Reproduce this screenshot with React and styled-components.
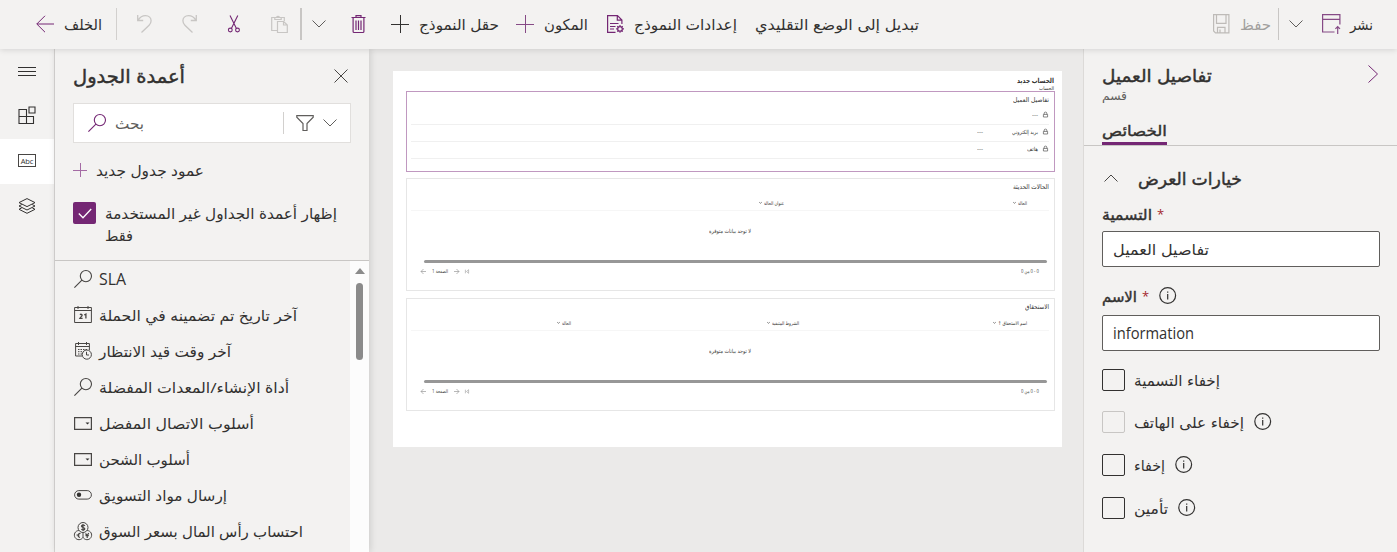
import React, { useLayoutEffect, useRef, useState } from "react";
import styled, { createGlobalStyle } from "styled-components";

const purple = "#742774";
const ink = "#323130";
const soft = "#484644";

const GlobalStyle = createGlobalStyle`
  * { box-sizing: border-box; }
  body {
    margin: 0;
    overflow: hidden;
    background: #ebeae9;
    color: ${ink};
    font-family: "Open Sans", "Noto Sans", "DejaVu Sans Condensed", "DejaVu Sans", sans-serif;
  }
`;

/* ---------- text ---------- */

const TextBox = styled.span`
  display: block;
  flex: none;
  direction: ltr;
  text-align: left;
  width: ${(p) => p.$w}px;
  height: ${(p) => p.$lh}px;
  line-height: ${(p) => p.$lh}px;
  font-size: ${(p) => p.$size}px;
  font-weight: ${(p) => p.$weight};
  color: ${(p) => p.$color};
  -webkit-text-stroke: ${(p) => (p.$semi ? 0.4 : 0)}px currentColor;
`;

const TextInner = styled.span`
  display: inline-block;
  vertical-align: top;
  direction: rtl;
  white-space: nowrap;
  transform-origin: left center;
`;

function Text({ w, size = 14, lh = 20, weight = 400, color = ink, semi, children }) {
  const ref = useRef(null);
  const [scale, setScale] = useState(1);
  useLayoutEffect(() => {
    if (ref.current?.offsetWidth) setScale(w / ref.current.getBoundingClientRect().width);
  }, [w]);
  return (
    <TextBox $w={w} $size={size} $lh={lh} $weight={weight} $color={color} $semi={semi}>
      <TextInner ref={ref} style={{ transform: `scaleX(${scale})` }}>{children}</TextInner>
    </TextBox>
  );
}

/* ---------- icons ---------- */

const Svg = styled.svg`
  display: block;
  flex: none;
  overflow: visible;
  fill: none;
  stroke: ${(p) => p.$color || soft};
  stroke-width: ${(p) => p.$sw || 1};
`;

const Icon = ({ w = 18, h = 18, color, sw, children }) => (
  <Svg width={w} height={h} viewBox={`0 0 ${w} ${h}`} $color={color} $sw={sw}>{children}</Svg>
);

const BackIcon = () => (
  <Icon color={purple}><path d="M18 9H.8M9 .8L.8 9 9 17.200" /></Icon>
);
const UndoIcon = () => (
  <Icon w={15} h={18} color="#c8c6c4" sw={1.3}><path d="M.7 0v5.500h5.500M1 5.300C3 2 5.500 .6 8.500 .6c3.500 0 5.600 2.400 5.600 5.200 0 2-.8 3.200-2 4.400L4.500 17.500" /></Icon>
);
const RedoIcon = () => (
  <Icon w={15} h={18} color="#c8c6c4" sw={1.3}><path d="M14.300 0v5.500H8.800M14 5.300C12 2 9.500.6 6.500.6 3 .6.9 3 .9 5.800c0 2 .8 3.200 2 4.400L10.500 17.500" /></Icon>
);
const CutIcon = () => (
  <Icon w={12} h={18} color={purple} sw={1.1}>
    <path d="M2 .5l6.300 12.800M9.800.5L3.500 13.300" /><circle cx="2.300" cy="15" r="1.900" /><circle cx="9.500" cy="15" r="1.900" />
  </Icon>
);
const PasteIcon = () => (
  <Icon w={17} h={18} color="#c8c6c4" sw={1.2}>
    <path d="M6 15.500H.7v-13h12.600V6M3.800 4.500v-2h1.700a1.600 1.600 0 013 0h1.700v2zM6.500 6.500h6.200l3.600 3.500v7.500H6.500zM12.500 6.500V10h3.800" />
  </Icon>
);
const ChevronDown = ({ w = 14, color = "#605e5c" }) => (
  <Icon w={w} h={8} color={color}><path d={`M.5.5L${w / 2} 7 ${w - 0.5}.5`} /></Icon>
);
const ChevronUp = () => (
  <Icon w={14} h={8}><path d="M.5 7.500L7 1l6.500 6.500" /></Icon>
);
const TrashIcon = () => (
  <Icon w={15} h={18} color={purple} sw={1.2}>
    <path d="M.5 2.500h14M5 2.500V.6h5v1.900M2.100 2.500v14a1 1 0 001 1h8.800a1 1 0 001-1v-14M5 5.500v9.500M7.500 5.500v9.500M10 5.500v9.500" />
  </Icon>
);
const PlusIcon = ({ size = 18, color = ink }) => (
  <Icon w={size} h={size} color={color}>
    <path d={`M${Math.floor(size / 2) + 0.5} 0v${size}M0 ${Math.floor(size / 2) + 0.5}h${size}`} />
  </Icon>
);
const FormSettingsIcon = () => (
  <Icon w={17} h={18} color={purple} sw={1.2}>
    <path d="M8.500 17.400H.6V.6h9.900l4.400 4.400v4M10.300.6v4.600h4.600M3 8.500h8.500M3 11.500h5.500M3 14h4" />
    <circle cx="13" cy="13.900" r="2.300" />
    <path d="M13 10v1.600M13 16.200v1.600M9.100 13.900h1.600M15.300 13.900H17M10.300 11.200l1.100 1.100M14.600 15.500l1.100 1.100M15.700 11.200l-1.100 1.100M11.400 15.500l-1.100 1.100" />
  </Icon>
);
const SaveIcon = () => (
  <Icon w={17} h={20} color="#bebbb8" sw={1.2}>
    <path d="M.6.6h15.300v18.300H2.500L.6 17zM3.500.6v8.700h9.500V.6M4.500 18.900v-5.600h7.500v5.600M7 15.500v3.400" />
  </Icon>
);
const PublishIcon = () => (
  <Icon w={19} h={20} color="#864a86" sw={1.2}>
    <path d="M12.500 18H.6V.6h17.300v10M.6 5.300h17.300M15.700 20v-7.500M13.400 14.800l2.300-2.300 2.300 2.300" />
  </Icon>
);
const MenuIcon = () => <Icon h={10} color={ink}><path d="M0 .5h18M0 4.500h18M0 8.500h18" /></Icon>;
const ComponentsIcon = () => (
  <Icon w={18} h={18} color={ink} sw={1.1}>
    <path d="M1 3.500h7.500v14H1zM1 10.500h14.500v7H1M11 1h6v6h-6z" />
  </Icon>
);
const AbcFrame = styled.span`
  display: grid;
  place-items: center;
  width: 18px;
  height: 13px;
  border: 1px solid ${soft};
  font-size: 7.500px;
  line-height: 10px;
  letter-spacing: -0.1px;
`;
const LayersIcon = () => (
  <Icon w={18} h={16} color={ink}>
    <path d="M9 .6l8 4-8 4-8-4zM3.800 6.500L1 8l8 4 8-4-2.800-1.500M3.800 9.800L1 11.300l8 4 8-4-2.800-1.500" />
  </Icon>
);
const CloseIcon = () => <Icon w={14} h={14}><path d="M.5.5l13 13M13.500.5l-13 13" /></Icon>;
const SearchIcon = ({ color = soft }) => (
  <Icon color={color} sw={1.1}><circle cx="11.900" cy="6.100" r="5.600" /><path d="M7.900 10.100L.4 17.600" /></Icon>
);
const FilterIcon = () => (
  <Icon w={18} h={16} color="#605e5c" sw={1.2}><path d="M.8.6h16.400v1.600L11 8.500v7H7v-7L.8 2.200z" /></Icon>
);
const CalendarIcon = () => (
  <Icon>
    <path d="M.6 1.500h16.800v15H.6zM.6 4.500h16.800M4 0v3M14 0v3" />
    <path d="M6 8.700c.8-.9 2.400-.4 2.100.7-.2.9-1.300 1.300-2.200 2.900h2.700M10.200 9l1.700-.9v4.500" strokeWidth="1.300" />
  </Icon>
);
const CalendarClockIcon = () => (
  <Icon>
    <path d="M8 14H1.600V1.500h13.800V8M1.600 4.500h13.800M4.500 0v3M12.500 0v3" />
    <path d="M4 7.500h9M4 9.700h6M4 12h4" strokeDasharray="1.500 1" />
    <circle cx="12.800" cy="12.600" r="4.600" /><path d="M12.500 9.800v3.200H15" />
  </Icon>
);
const DropdownIcon = () => (
  <Icon h={13}><path d="M.6.6h16.800v11.800H.6z" strokeWidth="1.200" /><path d="M11.500 5.500h4l-2 2z" fill={ink} stroke="none" /></Icon>
);
const ToggleIcon = () => (
  <Icon h={10}><rect x=".6" y=".6" width="16.800" height="8.500" rx="4.200" /><circle cx="5" cy="4.800" r="2.200" fill={ink} stroke="none" /></Icon>
);
const CoinsIcon = () => (
  <Icon>
    <circle cx="9" cy="5.500" r="5" />
    <path d="M4.800 8.500a4.600 4.600 0 104.200 6.800 4.600 4.600 0 104.200-6.800M9 10.500v4.800" />
    <path d="M11 3.700C9.500 2.500 7.500 3 7.500 4.200c0 1.500 3.300 1 3.300 2.600 0 1.200-2 1.500-3.500.5M9 2v7M6.500 11.500c-2.500-.8-3.500 3.300-.5 4M2.500 13h3M11.500 11.500l1.700 2 1.500-2.300M13.200 13.500V16M11.500 13.700h3.300" strokeWidth="1.200" />
  </Icon>
);
const InfoIcon = () => (
  <Icon w={18} h={18} color={ink} sw={1.2}><circle cx="8.700" cy="8.500" r="7.900" /><path d="M8.700 7v5.500M8.700 4.500v1.300" /></Icon>
);
const ForwardIcon = () => <Icon w={11} h={18} color={purple}><path d="M.5.5L9.500 9l-9 8.500" /></Icon>;
const CheckIcon = () => <Icon w={14} h={11} color="#fff" sw={1.3}><path d="M.8 5.500l4.200 4.300L13.200 1" /></Icon>;
const LockIcon = () => (
  <Icon w={5} h={6} color="#555" sw={0.7}><path d="M.4 2.400h4.200v2.600H.4zM1.200 2.400V1.200a1.300 1.100 0 012.600 0v1.200" /></Icon>
);
const TinyArrow = ({ flip }) => (
  <Icon w={5} h={5} color="#888" sw={0.6}><path d={flip ? "M0 2.500h5M2.500 0L5 2.500 2.500 5" : "M5 2.500H0M2.500 0L0 2.500 2.500 5"} /></Icon>
);
const TinyLast = () => (
  <Icon w={4} h={5} color="#999" sw={0.6}><path d="M.4.7v3.600M3.600.7L1.500 2.500l2.100 1.800z" /></Icon>
);
const TinyChevron = () => <Icon w={3} h={2} color="#555" sw={0.7}><path d="M.2.2l1.300 1.100L2.800.2" /></Icon>;

/* ---------- top bar ---------- */

const TopBar = styled.header`
  position: relative;
  z-index: 2;
  display: flex;
  align-items: center;
  height: 49px;
  padding: 0 24px 1px 36px;
  background: #f3f2f1;
  box-shadow: 0 1px 6px rgba(0, 0, 0, 0.13);
`;
const Command = styled.div`
  display: flex;
  align-items: center;
  gap: ${(p) => p.$gap ?? 10}px;
  margin-left: ${(p) => p.$ml || 0}px;
`;
const BarDivider = styled.i`
  width: ${(p) => p.$w || 1}px;
  height: 32px;
  margin-left: ${(p) => p.$ml}px;
  background: ${(p) => p.$color || "#d2d0ce"};
`;
const Spacer = styled.div`flex: 1;`;

/* ---------- page frame ---------- */

const Page = styled.div`
  display: flex;
  flex-direction: column;
  height: 552px;
`;
const Body = styled.main`
  display: flex;
  flex: 1;
  min-height: 0;
`;
const Rail = styled.nav`
  width: 55px;
  flex: none;
  border-right: 1px solid #d8d6d4;
  background: #f3f2f1;
`;
const RailItem = styled.div`
  display: flex;
  align-items: center;
  justify-content: center;
  height: 45px;
  padding-bottom: ${(p) => p.$lift || 0}px;
  background: ${(p) => (p.$active ? "#fff" : "transparent")};
`;

/* ---------- column panel ---------- */

const Panel = styled.aside`
  position: relative;
  z-index: 1;
  display: flex;
  flex-direction: column;
  width: 314px;
  flex: none;
  background: #f3f2f1;
  box-shadow: 1px 0 7px rgba(0, 0, 0, 0.14);
`;
const PanelTop = styled.div`
  height: 212px;
  flex: none;
  padding: 14px 18px 0;
  border-bottom: 1px solid #c8c6c4;
`;
const PanelHeader = styled.div`
  display: flex;
  align-items: center;
  justify-content: space-between;
  height: 26px;
  padding-right: 3px;
`;
const SearchBox = styled.div`
  display: flex;
  align-items: center;
  height: 40px;
  margin-top: 14px;
  padding: 0 13px 0 14px;
  border: 1px solid #e1dfdd;
  background: #fff;
`;
const SearchText = styled.div`
  flex: 1;
  padding-left: 9px;
`;
const SearchDivider = styled.i`
  width: 1px;
  height: 22px;
  margin-right: 12px;
  background: #d2d0ce;
`;
const SearchChevron = styled.div`margin-left: 9px;`;
const NewColumn = styled.div`
  display: flex;
  align-items: center;
  gap: 9px;
  margin-top: 17px;
  height: 20px;
`;
const UnusedOption = styled.div`
  display: flex;
  gap: 9px;
  margin-top: 22px;
`;
const CheckedBox = styled.span`
  display: grid;
  place-items: center;
  width: 23px;
  height: 22px;
  border-radius: 2px;
  background: ${purple};
`;
const ListArea = styled.div`
  display: flex;
  flex: 1;
  min-height: 0;
  overflow: hidden;
`;
const ColumnList = styled.div`
  flex: 1;
`;
const ColumnRow = styled.div`
  display: flex;
  align-items: center;
  gap: 7px;
  height: 36px;
  padding-left: 19px;
`;
const ScrollTrack = styled.div`
  display: flex;
  flex-direction: column;
  align-items: center;
  width: 19px;
  padding-top: 7px;
  background: #fcfcfc;
`;
const ScrollArrow = styled.i`
  border: 5px solid transparent;
  border-top: 0;
  border-bottom: 6px solid #8b8b8b;
`;
const ScrollThumb = styled.i`
  width: 7px;
  height: 77px;
  margin-top: 9px;
  border-radius: 4px;
  background: #8b8b8b;
`;

/* ---------- form preview ---------- */

const Canvas = styled.section`
  flex: 1;
  min-width: 0;
  padding: 22px 21px 0 24px;
  background: #ebeae9;
`;
const FormSheet = styled.div`
  height: 376px;
  padding: 5px 7px 0 13px;
  background: #fff;
`;
const FormTitle = styled.div`
  display: flex;
  flex-direction: column;
  align-items: flex-end;
  height: 15px;
  padding-right: 1px;
`;
const Section = styled.div`
  display: flex;
  flex-direction: column;
  height: ${(p) => p.$h}px;
  margin-bottom: ${(p) => p.$mb ?? 7}px;
  padding: 4px 5px 0 4px;
  border: 1px solid ${(p) => (p.$selected ? "#c098c0" : "#e6e6e6")};
`;
const SectionTitle = styled.div`
  display: flex;
  justify-content: flex-end;
  height: ${(p) => p.$h}px;
`;
const FieldRow = styled.div`
  display: flex;
  flex-direction: row-reverse;
  align-items: center;
  height: 17px;
  padding: 0 1px 2px 0;
  border-bottom: 1px solid #f0f0f0;
`;
const FieldLabel = styled.div`
  display: flex;
  justify-content: flex-end;
  width: ${(p) => p.$w}px;
  margin-right: 5px;
`;
const GridHead = styled.div`
  display: flex;
  flex-direction: row-reverse;
  align-items: center;
  height: 16px;
  padding-right: 22px;
  border-bottom: 1px solid #f6f6f6;
`;
const HeadCell = styled.div`
  display: flex;
  flex-direction: row-reverse;
  align-items: center;
  gap: 2px;
  width: ${(p) => p.$w}px;
`;
const GridEmpty = styled.div`
  display: flex;
  justify-content: center;
  align-items: center;
  height: 40px;
`;
const GridBar = styled.i`
  height: 3px;
  margin: 9px 2px 0 13px;
  border-radius: 2px;
  background: #979797;
`;
const GridFooter = styled.div`
  display: flex;
  justify-content: space-between;
  align-items: center;
  height: 8px;
  margin-top: 4px;
  padding: 0 10px;
`;
const Pager = styled.div`
  display: flex;
  align-items: center;
  gap: 6px;
`;

/* ---------- property pane ---------- */

const Properties = styled.aside`
  width: 314px;
  flex: none;
  border-left: 1px solid #dcdad8;
  background: #f3f2f1;
`;
const PropHeader = styled.div`
  display: flex;
  justify-content: space-between;
  height: 70px;
  padding: 14px 18px 0;
`;
const ForwardSlot = styled.div`padding-top: 2px;`;
const Tabs = styled.div`
  display: flex;
  height: 27px;
  padding-left: 18px;
  border-bottom: 1px solid #c8c6c4;
`;
const Tab = styled.div`
  height: 26px;
  border-bottom: 3px solid ${purple};
`;
const PropBody = styled.div`padding: 20px 17px 0 18px;`;
const GroupTitle = styled.div`
  display: flex;
  align-items: center;
  gap: 20px;
  height: 26px;
  padding: 0 0 2px 2px;
`;
const FieldName = styled.div`
  display: flex;
  align-items: center;
  height: 20px;
  margin-top: ${(p) => p.$mt}px;
`;
const Required = styled.span`
  width: 6px;
  margin-left: 5px;
  font-size: 13px;
  line-height: 20px;
  color: #a4262c;
`;
const InfoSlot = styled.span`margin-left: ${(p) => p.$ml}px;`;
const Input = styled.div`
  display: flex;
  align-items: center;
  height: 36px;
  margin-top: ${(p) => p.$mt}px;
  padding-left: 10px;
  border: 1px solid #605e5c;
  border-radius: 2px;
  background: #fff;
`;
const CheckRow = styled.div`
  display: flex;
  align-items: center;
  height: 22px;
  margin-top: ${(p) => p.$mt}px;
`;
const EmptyBox = styled.span`
  width: 23px;
  height: 22px;
  margin-right: 9px;
  border: 1px solid ${(p) => (p.$disabled ? "#c8c6c4" : ink)};
  border-radius: 2px;
`;

const columns = [
  { icon: <SearchIcon />, label: "SLA", w: 27, size: 16 },
  { icon: <CalendarIcon />, label: "آخر تاريخ تم تضمينه في الحملة", w: 198 },
  { icon: <CalendarClockIcon />, label: "آخر وقت قيد الانتظار", w: 132 },
  { icon: <SearchIcon />, label: "أداة الإنشاء/المعدات المفضلة", w: 190 },
  { icon: <DropdownIcon />, label: "أسلوب الاتصال المفضل", w: 155 },
  { icon: <DropdownIcon />, label: "أسلوب الشحن", w: 91 },
  { icon: <ToggleIcon />, label: "إرسال مواد التسويق", w: 128 },
  { icon: <CoinsIcon />, label: "احتساب رأس المال بسعر السوق", w: 204 },
];

const options = [
  { label: "إخفاء التسمية", w: 86, mt: 18 },
  { label: "إخفاء على الهاتف", w: 110, mt: 20, info: true, disabled: true },
  { label: "إخفاء", w: 31, mt: 21, info: true },
  { label: "تأمين", w: 34, mt: 21, info: true },
];

function GridSection({ title, titleWidth, heads, mb }) {
  return (
    <Section $h={113} $mb={mb}>
      <SectionTitle $h={12}><Text w={titleWidth} size={6.5} lh={7} color="#333">{title}</Text></SectionTitle>
      <GridHead>
        {heads.map((h) => (
          <HeadCell key={h.label} $w={h.cell}>
            <Text w={h.w} size={5} lh={6} color="#333">{h.label}</Text>
            <TinyChevron />
          </HeadCell>
        ))}
      </GridHead>
      <GridEmpty><Text w={42} size={5.5} lh={7} color="#333">لا توجد بيانات متوفرة</Text></GridEmpty>
      <GridBar />
      <GridFooter>
        <Pager>
          <TinyArrow />
          <Text w={16} size={5} lh={6} color="#444">الصفحة 1</Text>
          <TinyArrow flip />
          <TinyLast />
        </Pager>
        <Text w={18} size={5} lh={6} color="#444">0 - 0 من 0</Text>
      </GridFooter>
    </Section>
  );
}

export default function App() {
  return (
    <Page>
      <GlobalStyle />
      <TopBar>
        <Command><BackIcon /><Text w={38} size={15}>الخلف</Text></Command>
        <BarDivider $ml={14} />
        <Command $ml={20}><UndoIcon /></Command>
        <Command $ml={30}><RedoIcon /></Command>
        <Command $ml={31}><CutIcon /></Command>
        <Command $ml={31}><PasteIcon /></Command>
        <BarDivider $ml={12} $w={2} $color="#c8c6c4" />
        <Command $ml={10}><ChevronDown /></Command>
        <Command $ml={25}><TrashIcon /></Command>
        <Command $ml={25}><PlusIcon /><Text w={80} size={15}>حقل النموذج</Text></Command>
        <Command $ml={17}><PlusIcon color="#864a86" /><Text w={44} size={15}>المكون</Text></Command>
        <Command $ml={19}><FormSettingsIcon /><Text w={103} size={15}>إعدادات النموذج</Text></Command>
        <Command $ml={18}><Text w={164} size={15}>تبديل إلى الوضع التقليدي</Text></Command>
        <Spacer />
        <Command><SaveIcon /><Text w={31} size={15} color="#a19f9d">حفظ</Text></Command>
        <BarDivider $ml={7} $color="#c8c6c4" />
        <Command $ml={10}><ChevronDown /></Command>
        <Command $ml={19} $gap={9}><PublishIcon /><Text w={23} size={15}>نشر</Text></Command>
      </TopBar>
      <Body>
        <Rail>
          <RailItem><MenuIcon /></RailItem>
          <RailItem $lift={3}><ComponentsIcon /></RailItem>
          <RailItem $active $lift={2}><AbcFrame>Abc</AbcFrame></RailItem>
          <RailItem $lift={2}><LayersIcon /></RailItem>
        </Rail>
        <Panel>
          <PanelTop>
            <PanelHeader>
              <Text w={112} size={19} lh={26} semi>أعمدة الجدول</Text>
              <CloseIcon />
            </PanelHeader>
            <SearchBox>
              <SearchIcon color={purple} />
              <SearchText><Text w={29} size={15} color="#605e5c">بحث</Text></SearchText>
              <SearchDivider />
              <FilterIcon />
              <SearchChevron><ChevronDown /></SearchChevron>
            </SearchBox>
            <NewColumn>
              <PlusIcon size={14} color="#a46ba4" />
              <Text w={108} size={15}>عمود جدول جديد</Text>
            </NewColumn>
            <UnusedOption>
              <CheckedBox><CheckIcon /></CheckedBox>
              <div>
                <Text w={232} size={15} lh={22}>إظهار أعمدة الجداول غير المستخدمة</Text>
                <Text w={28} size={15} lh={22}>فقط</Text>
              </div>
            </UnusedOption>
          </PanelTop>
          <ListArea>
            <ColumnList>
              {columns.map((c) => (
                <ColumnRow key={c.label}>{c.icon}<Text w={c.w} size={c.size || 15}>{c.label}</Text></ColumnRow>
              ))}
            </ColumnList>
            <ScrollTrack><ScrollArrow /><ScrollThumb /></ScrollTrack>
          </ListArea>
        </Panel>
        <Canvas>
          <FormSheet>
            <FormTitle>
              <Text w={37} size={7} lh={9} weight={700}>الحساب جديد</Text>
              <Text w={15} size={5} lh={6}>الحساب</Text>
            </FormTitle>
            <Section $h={81} $mb={6} $selected>
              <SectionTitle $h={12}><Text w={36} size={6.5} lh={7} color="#333">تفاصيل العميل</Text></SectionTitle>
              <FieldRow>
                <LockIcon /><FieldLabel $w={6}><Text w={6} size={6} lh={6}>---</Text></FieldLabel>
              </FieldRow>
              <FieldRow>
                <LockIcon />
                <FieldLabel $w={55}><Text w={26} size={5.5} lh={6} color="#333">بريد إلكتروني</Text></FieldLabel>
                <Text w={6} size={6} lh={6}>---</Text>
              </FieldRow>
              <FieldRow>
                <LockIcon />
                <FieldLabel $w={55}><Text w={11} size={5.5} lh={6} color="#333">هاتف</Text></FieldLabel>
                <Text w={6} size={6} lh={6}>---</Text>
              </FieldRow>
            </Section>
            <GridSection
              title="الحالات الحديثة"
              titleWidth={36}
              heads={[{ label: "الحالة", w: 9, cell: 243 }, { label: "عنوان الحالة", w: 20, cell: 40 }]}
            />
            <GridSection
              title="الاستحقاق"
              titleWidth={24}
              heads={[
                { label: "اسم الاستحقاق ↑", w: 29, cell: 228 },
                { label: "الشروط المتبقية", w: 27, cell: 228 },
                { label: "الحالة", w: 9, cell: 30 },
              ]}
            />
          </FormSheet>
        </Canvas>
        <Properties>
          <PropHeader>
            <div>
              <Text w={110} size={17.5} lh={24} semi>تفاصيل العميل</Text>
              <Text w={25} size={12} lh={18} color="#605e5c">قسم</Text>
            </div>
            <ForwardSlot><ForwardIcon /></ForwardSlot>
          </PropHeader>
          <Tabs><Tab><Text w={65} size={15} lh={23} semi>الخصائص</Text></Tab></Tabs>
          <PropBody>
            <GroupTitle><ChevronUp /><Text w={104} size={17.5} lh={26} semi>خيارات العرض</Text></GroupTitle>
            <FieldName $mt={12}><Text w={50} size={15} semi>التسمية</Text><Required>*</Required></FieldName>
            <Input $mt={7}><Text w={96} size={15}>تفاصيل العميل</Text></Input>
            <FieldName $mt={19}>
              <Text w={35} size={15} semi>الاسم</Text><Required>*</Required>
              <InfoSlot $ml={11}><InfoIcon /></InfoSlot>
            </FieldName>
            <Input $mt={9}><Text w={81} size={16}>information</Text></Input>
            {options.map((o) => (
              <CheckRow key={o.label} $mt={o.mt}>
                <EmptyBox $disabled={o.disabled} />
                <Text w={o.w} size={15}>{o.label}</Text>
                {o.info && <InfoSlot $ml={10}><InfoIcon /></InfoSlot>}
              </CheckRow>
            ))}
          </PropBody>
        </Properties>
      </Body>
    </Page>
  );
}
